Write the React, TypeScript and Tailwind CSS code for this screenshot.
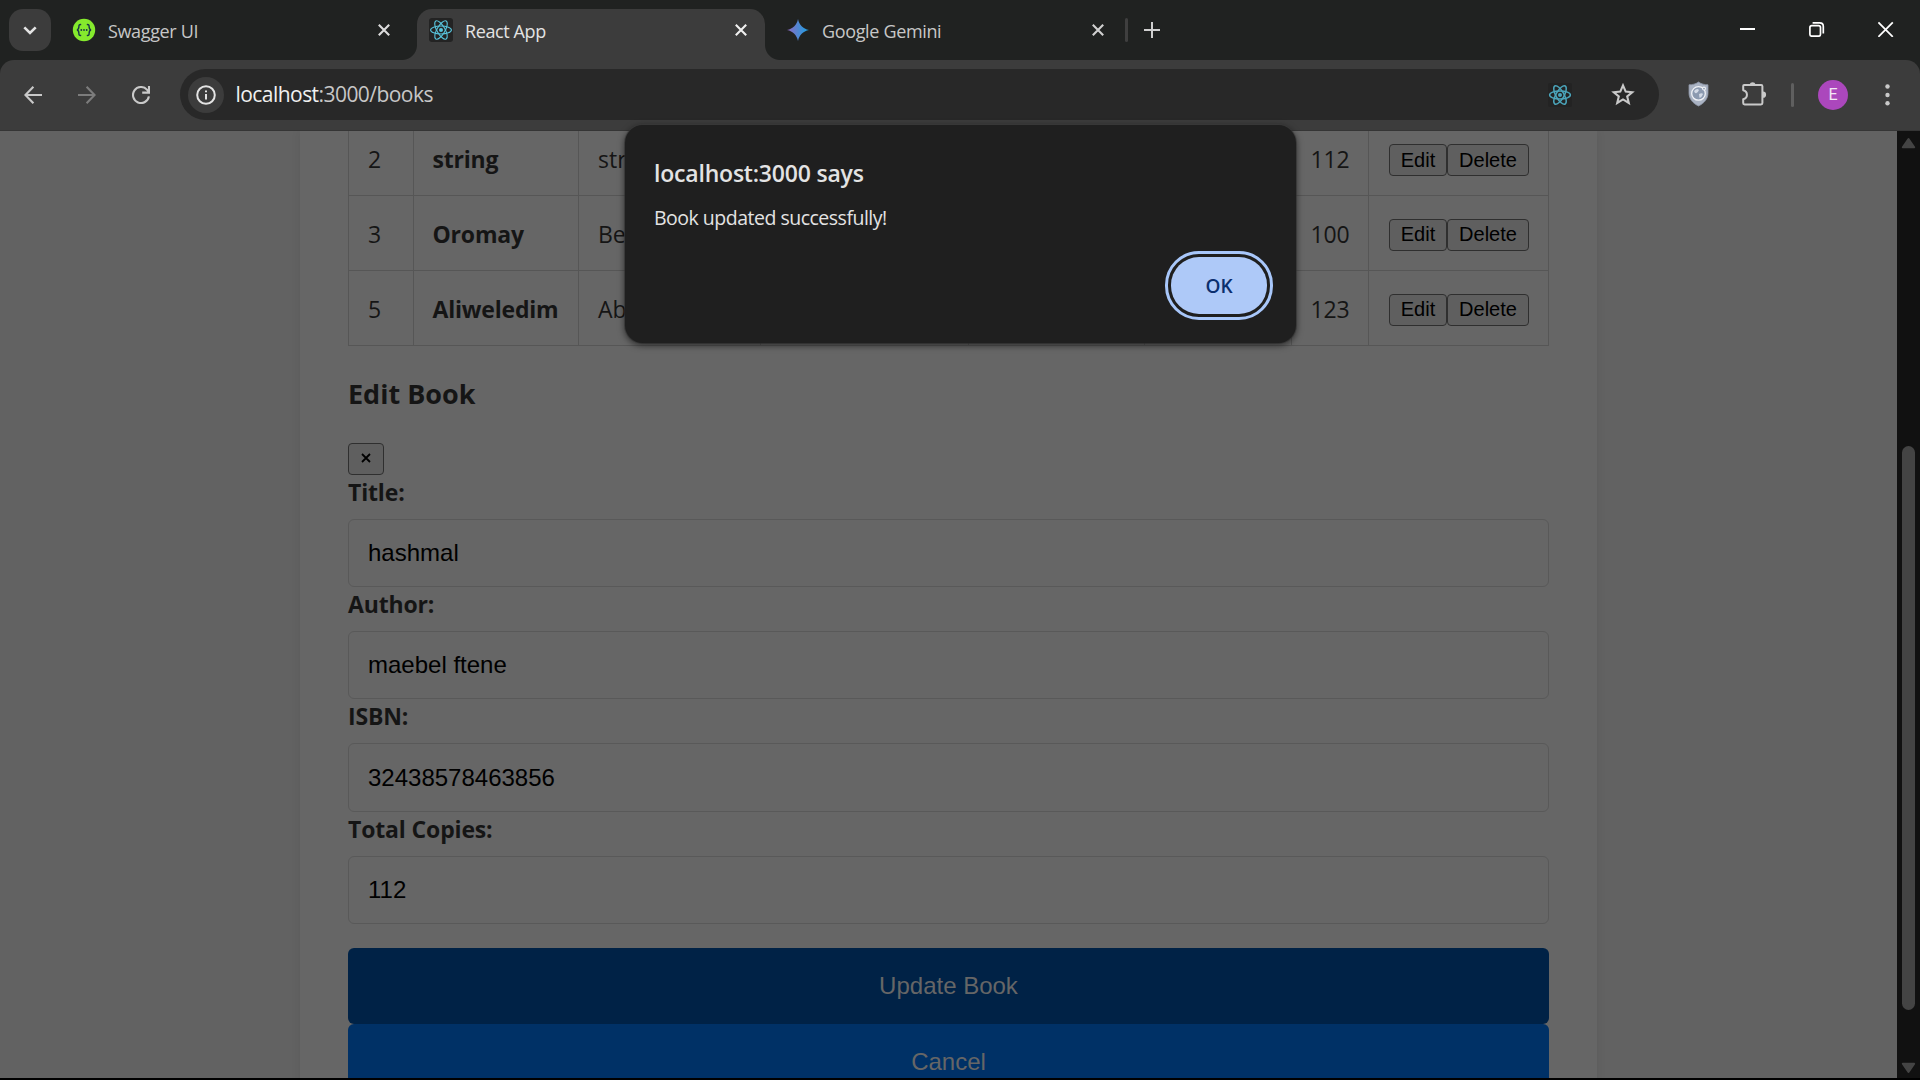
import type { ReactNode } from "react";

const REACT_BLUE = "#58c4dc";

function ReactLogo({ size, color = REACT_BLUE, stroke = 1.1 }: { size: number; color?: string; stroke?: number }) {
  return (
    <svg width={size} height={size} viewBox="-12 -12 24 24" fill="none" stroke={color} strokeWidth={stroke}>
      <circle r="2" fill={color} stroke="none" />
      <ellipse rx="10.4" ry="4" />
      <ellipse rx="10.4" ry="4" transform="rotate(60)" />
      <ellipse rx="10.4" ry="4" transform="rotate(120)" />
    </svg>
  );
}

function SwaggerLogo() {
  return (
    <svg width="24" height="24" viewBox="0 0 24 24" fill="none">
      <circle cx="12" cy="12" r="11.2" fill="#85ea2d" />
      <path
        d="M9.2 6.6 C7 6.4 6.9 7.3 6.9 8.6 C6.9 10.6 6.6 11.6 5 12 C6.6 12.4 6.9 13.4 6.9 15.4 C6.9 16.7 7 17.6 9.2 17.4 M14.8 6.6 C17 6.4 17.1 7.3 17.1 8.6 C17.1 10.6 17.4 11.6 19 12 C17.4 12.4 17.1 13.4 17.1 15.4 C17.1 16.7 17 17.6 14.8 17.4"
        stroke="#173647"
        strokeWidth="1.4"
      />
      <circle cx="9.3" cy="12" r=".9" fill="#173647" />
      <circle cx="12" cy="12" r=".9" fill="#173647" />
      <circle cx="14.7" cy="12" r=".9" fill="#173647" />
    </svg>
  );
}

function GeminiLogo() {
  return (
    <svg width="22" height="22" viewBox="0 0 22 22">
      <defs>
        <linearGradient id="gem" x1="0" y1="0" x2="1" y2="0">
          <stop offset="0" stopColor="#9168c0" />
          <stop offset=".45" stopColor="#5684d1" />
          <stop offset="1" stopColor="#1ba1e3" />
        </linearGradient>
      </defs>
      <path d="M11 0 C12.2 6 16 9.8 22 11 C16 12.2 12.2 16 11 22 C9.8 16 6 12.2 0 11 C6 9.8 9.8 6 11 0Z" fill="url(#gem)" />
    </svg>
  );
}

function CloseX({ color }: { color: string }) {
  return (
    <svg width="12" height="12" viewBox="0 0 12 12" stroke={color} strokeWidth="2.1">
      <path d="M.8 .8 L11.2 11.2 M11.2 .8 L.8 11.2" />
    </svg>
  );
}

function TabStrip() {
  return (
    <div className="flex h-[60px] shrink-0 items-start bg-[#202221]">
      <button className="mt-[9px] ml-[9px] flex size-[42px] items-center justify-center rounded-[14px] bg-[#3c3c3c]">
        <svg width="14" height="9" viewBox="0 0 14 9" fill="none" stroke="#e3e3e3" strokeWidth="2.6">
          <path d="M1.3 1.3 L7 7 L12.7 1.3" />
        </svg>
      </button>

      <div className="mt-[9px] flex h-[42px] w-[366px] items-center pl-[21px]">
        <SwaggerLogo />
        <span className="mt-[3px] ml-[12px] text-[18px] tracking-[-0.35px] text-[#c7c7c7]">Swagger UI</span>
        <span className="mr-[27px] ml-auto">
          <CloseX color="#dcdcdc" />
        </span>
      </div>

      <div className="relative mt-[9px] flex h-[51px] w-[348px] items-center rounded-t-[15px] bg-[#3c3c3c] pb-[9px]">
        <span className="absolute bottom-0 -left-[15px] size-[15px] bg-[radial-gradient(circle_at_0_0,transparent_14.5px,#3c3c3c_15.5px)]" />
        <span className="absolute -right-[15px] bottom-0 size-[15px] bg-[radial-gradient(circle_at_100%_0,transparent_14.5px,#3c3c3c_15.5px)]" />
        <span className="ml-[12px] flex size-6 items-center justify-center rounded-[3px] bg-[#232323]">
          <ReactLogo size={24} />
        </span>
        <span className="mt-[3px] ml-[12px] text-[18px] tracking-[-0.4px] text-[#e3e3e3]">React App</span>
        <span className="mr-[18px] ml-auto">
          <CloseX color="#f0f0f0" />
        </span>
      </div>

      <div className="mt-[9px] flex h-[42px] w-[361px] items-center pl-[22px]">
        <GeminiLogo />
        <span className="mt-[3px] ml-[13px] text-[18px] tracking-[-0.35px] text-[#c7c7c7]">Google Gemini</span>
        <span className="mr-[22px] ml-auto">
          <CloseX color="#d0d0d0" />
        </span>
      </div>

      <div className="mt-[18px] -ml-px h-[24px] w-[3px] rounded bg-[#3f3f3f]" />
      <svg className="mt-[22px] ml-[16px]" width="16" height="16" viewBox="0 0 16 16" stroke="#d0d0d0" strokeWidth="2">
        <path d="M8 0 V16 M0 8 H16" />
      </svg>

      <div className="mt-[21px] mr-[26px] ml-auto flex items-center gap-[53px]">
        <svg width="16" height="16" viewBox="0 0 16 16">
          <path d="M0 8 H15" stroke="#fff" strokeWidth="2" />
        </svg>
        <svg width="16" height="16" viewBox="0 0 16 16" fill="none" stroke="#fff" strokeWidth="1.7">
          <rect x=".9" y="4.6" width="10.6" height="10.6" rx="2" />
          <path d="M3.6 1.8 H10.6 Q14.3 1.8 14.3 5.4 V12.4" />
        </svg>
        <svg width="16" height="16" viewBox="0 0 16 16" stroke="#fff" strokeWidth="1.8">
          <path d="M.4 1.4 L14.8 15.8 M14.8 1.4 L.4 15.8" />
        </svg>
      </div>
    </div>
  );
}

function Toolbar() {
  return (
    <div className="shrink-0 bg-[#202221]">
      <div className="flex h-[71px] items-start rounded-t-[14px] border-b border-[#353535] bg-[#3c3c3c] pt-[9px]">
        <div className="flex h-[51px] w-[180px] items-center pl-[24px]">
          <svg width="18" height="18" viewBox="0 0 18 18" fill="none" stroke="#c9c9c9" strokeWidth="2.1">
            <path d="M18 9 H1.6 M9.4 .8 L1.4 9 L9.4 17.2" />
          </svg>
          <svg className="ml-[36px]" width="18" height="18" viewBox="0 0 18 18" fill="none" stroke="#7c7c7c" strokeWidth="2.1">
            <path d="M0 9 H16.4 M8.6 .8 L16.6 9 L8.6 17.2" />
          </svg>
          <svg className="ml-[36px]" width="18" height="18" viewBox="0 0 18 18" fill="none" stroke="#c9c9c9" strokeWidth="2.1">
            <path d="M16.9 10.4 A8 8 0 1 1 14.9 3.6 L16.4 5.2 M17 0 V6.6 H10.2" />
          </svg>
        </div>
        <div className="flex h-[51px] w-[1479px] items-center rounded-full bg-[#282828] pl-[7.5px]">
          <span className="flex size-9 items-center justify-center rounded-full bg-[#3c3c3c]">
            <svg width="20" height="20" viewBox="0 0 20 20" fill="none" stroke="#e3e3e3" strokeWidth="2">
              <circle cx="10" cy="10" r="8.8" />
              <path d="M10 9 V14.4 M10 5.4 V7.3" />
            </svg>
          </span>
          <span className="ml-[12px] text-[21px] tracking-[-0.55px] text-[#c7c7c7]">
            <span className="text-[#f0f0f0]">localhost</span>:3000/books
          </span>
          <span className="mr-[39px] ml-auto flex size-6 items-center justify-center rounded-[2px] bg-[#232323]">
            <ReactLogo size={24} color="#4ba5bb" stroke={1.5} />
          </span>
          <svg className="mr-[24px]" width="24" height="23" viewBox="0 0 24 23" fill="none" stroke="#c9c9c9" strokeWidth="2.1">
            <path d="M12 2.4 L14.7 8.6 L21.2 9.2 L16.2 13.4 L17.8 20 L12 16.4 L6.2 20 L7.8 13.4 L2.8 9.2 L9.3 8.6 Z" />
          </svg>
        </div>

        <svg className="mt-[12px] ml-[29px]" width="21" height="26" viewBox="0 0 21 26" fill="none">
          <path d="M10.5 1 C13 3 17 3.8 20 3.8 V12 C20 18 16 22.4 10.5 25 C5 22.4 1 18 1 12 V3.8 C4 3.8 8 3 10.5 1Z" fill="#aab3c3" stroke="#8d96a6" strokeWidth=".8" />
          <circle cx="10.5" cy="12.4" r="6.8" fill="#8c9ab0" stroke="#f1f3f7" strokeWidth="1.3" />
          <path d="M6 10 Q9 6.5 11 9 Q10 11.5 8.5 12 Q7 13 6 10Z M11 13 Q14 11.5 15 13 Q13.5 17 11.4 16.6Z" fill="#d3dae6" />
          <circle cx="16" cy="7.6" r="2" fill="#f1f3f7" />
          <circle cx="16" cy="7.6" r=".9" fill="#8c9ab0" />
        </svg>
        <svg className="mt-[12px] ml-[32px]" width="26" height="26" viewBox="0 0 26 26" fill="none" stroke="#c9c9c9" strokeWidth="2">
          <path d="M3.2 4 H20.2 Q21.4 4 21.4 5.2 V22 Q21.4 23.4 20 23.4 H3.6 Q2.2 23.4 2.2 22 V18.2 C7.2 16.8 7.2 10.6 2.2 9.2 V5 Q2.2 4 3.2 4Z" strokeLinejoin="round" />
          <path d="M8.6 3.6 A3.1 3.1 0 0 1 14.6 3.6Z M22 10.6 A3 3 0 0 1 22 16.8Z" fill="#c9c9c9" stroke="none" />
        </svg>
        <div className="mt-[14px] ml-[24px] h-[24px] w-[2.5px] rounded bg-[#5f5f5f]" />
        <div className="mt-[11px] ml-[24.5px] flex size-[30px] items-center justify-center rounded-full bg-[#ab47bc] font-[Roboto,sans-serif] text-[16px] text-[#f3e6f5]">
          E
        </div>
        <svg className="mt-[15px] ml-[36.5px]" width="5" height="22" viewBox="0 0 5 22" fill="#c9c9c9">
          <circle cx="2.5" cy="2.5" r="2.2" />
          <circle cx="2.5" cy="11" r="2.2" />
          <circle cx="2.5" cy="19.3" r="2.2" />
        </svg>
      </div>
    </div>
  );
}

function NativeButton({ children, className }: { children: ReactNode; className: string }) {
  return (
    <button
      className={
        "flex h-8 items-center justify-center rounded-[4px] border border-[#2f2f2f] bg-[#5f5f5f] font-['Liberation_Sans',Arial,sans-serif] text-[20px] leading-none text-black " +
        className
      }
    >
      {children}
    </button>
  );
}

const rows = [
  { id: "2", title: "string", author: "str", copies: "112", button: "pb-[1px]" },
  { id: "3", title: "Oromay", author: "Be", copies: "100", button: "pb-[3px]" },
  { id: "5", title: "Aliweledim", author: "Ab", copies: "123", button: "pb-[3px]" },
];

function BookTable() {
  return (
    <div className="border-r border-l border-[#565656]">
      {rows.map((r, i) => (
        <div
          key={r.id}
          className={
            "grid grid-cols-[65px_165px_182px_208px_176px_147px_77px_179px] divide-x divide-[#565656] border-b border-[#565656] text-[23px] leading-[31px] " +
            (i === 0 ? "h-[65px]" : "h-[75px]")
          }
        >
          {[r.id, r.title, r.author, "", "", "", r.copies].map((cell, c) => (
            <div
              key={c}
              className={
                "flex items-end overflow-hidden whitespace-nowrap pb-[20px] " +
                (c === 1 ? "pl-[18.5px] font-bold tracking-[-0.2px]" : c === 6 ? "pl-[18.5px] tracking-[-0.1px]" : "pl-[19px]")
              }
            >
              {cell}
            </div>
          ))}
          <div className="flex items-end pb-[19px] pl-[20px]">
            <NativeButton className={"w-[58px] " + r.button}>Edit</NativeButton>
            <NativeButton className={"w-[82px] " + r.button}>Delete</NativeButton>
          </div>
        </div>
      ))}
    </div>
  );
}

const fields = [
  { label: "Title:", value: "hashmal", h: "h-[112px]", box: "h-[68px]" },
  { label: "Author:", value: "maebel ftene", h: "h-[112px]", box: "h-[68px]" },
  { label: "ISBN:", value: "32438578463856", h: "h-[113px]", box: "h-[69px]" },
  { label: "Total Copies:", value: "112", h: "h-[112px]", box: "h-[68px]" },
];

function Page() {
  return (
    <div className="flex min-h-0 flex-1 bg-[#626262]">
      <div className="flex min-w-0 flex-1 overflow-hidden text-[#151515]">
        <div className="ml-[300px] h-[1100px] w-[1297px] bg-[#666] px-12 shadow-[0_0_10px_rgba(0,0,0,0.07)]">
          <BookTable />
          <h3 className="mt-[28px] h-[40px] text-[27px] leading-[40px] font-bold">Edit Book</h3>
          <NativeButton className="mt-[29px] w-9 pb-[3px]">
            <svg width="10" height="10" viewBox="0 0 10 10" stroke="#000" strokeWidth="1.8">
              <path d="M1 1 L9 9 M9 1 L1 9" />
            </svg>
          </NativeButton>
          {fields.map((f) => (
            <div key={f.label} className={f.h}>
              <label className="block h-[44px] pt-[1px] text-[23px] leading-[32px] font-bold tracking-[-0.15px]">{f.label}</label>
              <div
                className={
                  "flex items-center rounded-[6px] border border-[#595959] pl-[19px] font-['Liberation_Sans',Arial,sans-serif] text-[24px] text-black " +
                  f.box
                }
              >
                {f.value}
              </div>
            </div>
          ))}
          <button className="mt-[24px] block h-[76px] w-full rounded-[6px] bg-[#002246] font-['Liberation_Sans',Arial,sans-serif] text-[24px] text-[#666]">
            Update Book
          </button>
          <button className="block h-[76px] w-full rounded-[6px] bg-[#003166] font-['Liberation_Sans',Arial,sans-serif] text-[24px] text-[#666]">
            Cancel
          </button>
        </div>
      </div>
      <div className="flex w-[23px] flex-col items-center bg-[#111]">
        <svg className="mt-[6px]" width="15" height="12" viewBox="0 0 15 12">
          <path d="M7.5 2 L13.2 10.2 H1.8Z" fill="#444" stroke="#444" strokeWidth="2" strokeLinejoin="round" />
        </svg>
        <div className="mt-[297px] h-[564px] w-[13px] rounded-full bg-[#444]" />
        <svg className="mt-[52px]" width="15" height="12" viewBox="0 0 15 12">
          <path d="M7.5 10 L13.2 1.8 H1.8Z" fill="#444" stroke="#444" strokeWidth="2" strokeLinejoin="round" />
        </svg>
      </div>
    </div>
  );
}

function AlertDialog() {
  return (
    <div className="absolute top-[125px] left-[625px] flex h-[218px] w-[671px] flex-col rounded-[18px] bg-[#1f1f1f] px-[29px] shadow-[0_2px_6px_1px_rgba(0,0,0,0.5),0_0_0_1px_rgba(70,70,70,0.6)]">
      <h1 className="mt-[32px] text-[23px] leading-[32px] font-semibold tracking-[-0.2px] text-[#e3e3e3]">localhost:3000 says</h1>
      <p className="mt-[15px] text-[19.5px] leading-[28px] tracking-[-0.5px] text-[#e3e3e3]">Book updated successfully!</p>
      <button className="mt-[25px] flex h-[57px] w-[96px] items-center justify-center self-end rounded-[28px] bg-[#aec9f8] pt-px text-[19px] font-semibold text-[#0b2f6e] outline-3 outline-offset-3 outline-[#a8c7fa]">
        OK
      </button>
    </div>
  );
}

export default function App() {
  return (
    <div className="relative flex h-[1080px] w-[1920px] flex-col overflow-hidden border-b-2 border-black bg-[#202221] font-['Open_Sans','Noto_Sans',sans-serif]">
      <TabStrip />
      <Toolbar />
      <Page />
      <AlertDialog />
    </div>
  );
}
